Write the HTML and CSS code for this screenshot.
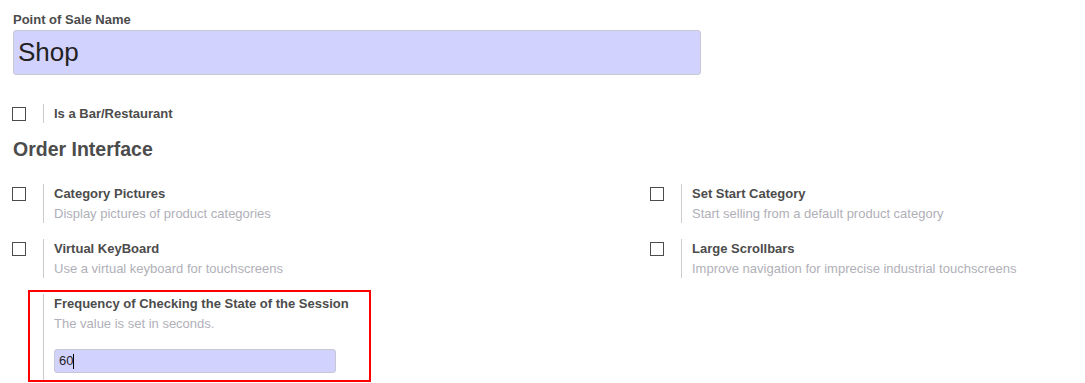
FILE: index.html
```html
<!DOCTYPE html>
<html>
<head>
<meta charset="utf-8">
<link rel="stylesheet" href="styles.css">
</head>
<body>
<div class="page">
  <div class="field-label">Point of Sale Name</div>
  <div class="name-input">Shop</div>

  <div class="setting single">
    <div class="check-pane"><span class="checkbox"></span></div>
    <div class="content-pane"><div class="title">Is a Bar/Restaurant</div></div>
  </div>

  <h2 class="section-title">Order Interface</h2>

  <div class="settings-grid">
    <div class="setting">
      <div class="check-pane"><span class="checkbox"></span></div>
      <div class="content-pane">
        <div class="title">Category Pictures</div>
        <div class="desc">Display pictures of product categories</div>
      </div>
    </div>
    <div class="setting">
      <div class="check-pane"><span class="checkbox"></span></div>
      <div class="content-pane">
        <div class="title">Set Start Category</div>
        <div class="desc">Start selling from a default product category</div>
      </div>
    </div>
    <div class="setting">
      <div class="check-pane"><span class="checkbox"></span></div>
      <div class="content-pane">
        <div class="title">Virtual KeyBoard</div>
        <div class="desc">Use a virtual keyboard for touchscreens</div>
      </div>
    </div>
    <div class="setting">
      <div class="check-pane"><span class="checkbox"></span></div>
      <div class="content-pane">
        <div class="title">Large Scrollbars</div>
        <div class="desc">Improve navigation for imprecise industrial touchscreens</div>
      </div>
    </div>
  </div>

  <div class="highlight">
    <div class="content-pane freq">
      <div class="title">Frequency of Checking the State of the Session</div>
      <div class="desc">The value is set in seconds.</div>
      <div class="small-input">60<span class="caret"></span></div>
    </div>
  </div>
</div>
</body>
</html>
```

FILE: styles.css
```css
html, body {
  margin: 0;
  padding: 0;
  background: #ffffff;
}

body {
  font-family: "Liberation Sans", Arial, sans-serif;
  font-size: 13px;
  line-height: 19.5px;
  color: #4c4c4c;
}

.page {
  padding: 10px 0 0 12px;
}

.field-label {
  font-weight: bold;
  padding-left: 1px;
}

.name-input {
  margin-left: 1px;
  width: 688px;
  height: 45px;
  box-sizing: border-box;
  background: #d2d2ff;
  border: 1px solid #c8c8d4;
  border-radius: 3px;
  font-size: 26px;
  line-height: 43px;
  padding-left: 4px;
  color: #222222;
}

.setting {
  display: flex;
  align-items: stretch;
}

.setting.single {
  margin-top: 29px;
}

.check-pane {
  width: 31px;
  flex: none;
  padding-top: 3px;
}

.checkbox {
  display: block;
  width: 14px;
  height: 14px;
  box-sizing: border-box;
  border: 1px solid #4c4c4c;
  background: #ffffff;
}

.content-pane {
  border-left: 1px solid #cccccc;
  padding-left: 10px;
}

.title {
  font-weight: bold;
  color: #4c4c4c;
}

.desc {
  color: #b0b0b8;
}

.section-title {
  margin: 14px 0 0 1px;
  font-size: 19.5px;
  line-height: 24px;
  font-weight: bold;
  color: #4c4c4c;
}

.settings-grid {
  margin-top: 23px;
  display: grid;
  grid-template-columns: 638px 1fr;
  row-gap: 16px;
}

.highlight {
  margin-top: 12px;
  margin-left: 16px;
  width: 343px;
  height: 92px;
  box-sizing: border-box;
  border: 2px solid #ff0000;
  padding: 2px 0 0 13px;
}

.content-pane.freq {
  height: 86px;
  box-sizing: border-box;
}

.small-input {
  margin-top: 16px;
  width: 282px;
  height: 24px;
  box-sizing: border-box;
  background: #d2d2ff;
  border: 1px solid #c8c8d4;
  border-radius: 3px;
  padding-left: 4px;
  line-height: 22px;
  color: #222222;
  display: flex;
  align-items: center;
}

.caret {
  display: inline-block;
  width: 1px;
  height: 15px;
  background: #000000;
}
```
